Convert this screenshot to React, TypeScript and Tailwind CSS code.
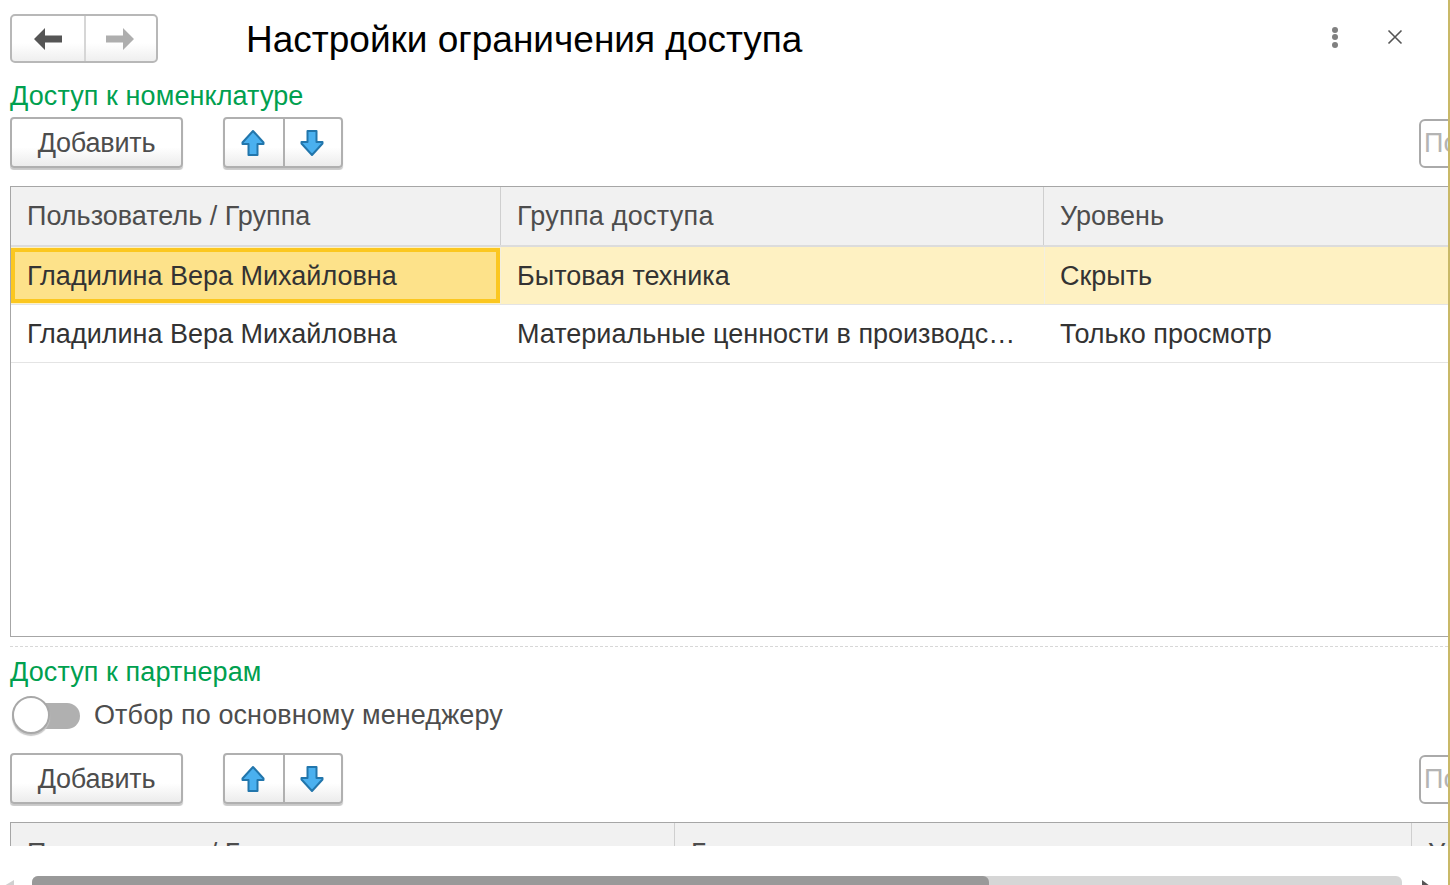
function UpArrow() {
  return (
    <svg className="mr-[2px]" width="24" height="28" viewBox="0 0 24 28">
      <path d="M12 2 L22.5 13.5 L22.5 15 L16.5 15 L16.5 26 L7.5 26 L7.5 15 L1.5 15 L1.5 13.5 Z" fill="#4ab0ef" stroke="#2276ac" strokeWidth="2" strokeLinejoin="round" />
    </svg>
  );
}

function DownArrow() {
  return (
    <svg className="mr-[2px]" width="24" height="28" viewBox="0 0 24 28">
      <path d="M12 26 L22.5 14.5 L22.5 13 L16.5 13 L16.5 2 L7.5 2 L7.5 13 L1.5 13 L1.5 14.5 Z" fill="#4ab0ef" stroke="#2276ac" strokeWidth="2" strokeLinejoin="round" />
    </svg>
  );
}

function Toolbar() {
  return (
    <div className="flex h-[53px] overflow-hidden">
      <button className="w-[173px] h-[51px] shrink-0 rounded-[4px] border-2 border-[#b0b0b0] bg-gradient-to-b from-white from-60% to-[#ececec] shadow-[0_2px_1px_#c8c8c8] pt-[2px] text-[27px] tracking-[-0.2px] leading-none text-[#4d4d4d]">
        Добавить
      </button>
      <div className="ml-[40px] w-[120px] h-[51px] shrink-0 flex rounded-[4px] border-2 border-[#b0b0b0] bg-gradient-to-b from-white from-60% to-[#ececec] shadow-[0_2px_1px_#c8c8c8]">
        <div className="w-[60px] flex items-center justify-center border-r-2 border-[#b0b0b0]">
          <UpArrow />
        </div>
        <div className="flex-1 flex items-center justify-center">
          <DownArrow />
        </div>
      </div>
      <div className="ml-[1076px] mt-[2px] w-[120px] h-[49px] shrink-0 rounded-[6px] border-2 border-[#aaaaaa] pl-[3px] flex items-center text-[27px] text-[#b4b4b4]">
        Поиск
      </div>
    </div>
  );
}

function Row({ a, b, c, active }: { a: string; b: string; c: string; active?: boolean }) {
  return (
    <div className={"flex h-[58px] border-b border-[#e4e4e4] text-[27px] text-[#333333] " + (active ? "bg-[#fef1c2]" : "")}>
      <div className={"w-[489px] shrink-0 flex items-center " + (active ? "bg-[#fde28a] border-[4px] border-[#fbc720] pl-[12px] pt-[2px] mt-[1px] h-[55px]" : "pl-[16px] pt-[1px]")}>
        {a}
      </div>
      <div className={"w-[544px] shrink-0 flex items-center pt-[2px] pr-[24px] " + (active ? "border-l border-[#f3efe0] pl-[16px]" : "pl-[17px]")}>
        <span className="truncate">{b}</span>
      </div>
      <div className={"flex-1 flex items-center pt-[2px] " + (active ? "border-l border-[#f3efe0] pl-[15px]" : "pl-[16px]")}>{c}</div>
    </div>
  );
}

export default function App() {
  return (
    <div className="w-[1450px] h-[885px] overflow-hidden bg-white border-r-2 border-[#c9b968] flex flex-col">
      <div className="h-[846px] overflow-hidden pl-[10px] font-['Liberation_Sans',Arial,sans-serif]">
        {/* шапка формы */}
        <div className="h-[84px] flex pt-[14px]">
          <div className="w-[148px] h-[49px] shrink-0 flex rounded-[5px] border-2 border-[#b8b8b8] bg-gradient-to-b from-white from-60% to-[#efefef]">
            <div className="w-[74px] flex items-center justify-center border-r-2 border-[#d6d6d6]">
              <svg width="30" height="24" viewBox="0 0 30 24">
                <path d="M1 12 L12 1 L12 8.5 L29 8.5 L29 15.5 L12 15.5 L12 23 Z" fill="#555555" />
              </svg>
            </div>
            <div className="flex-1 flex items-center justify-center pr-[2px]">
              <svg width="30" height="24" viewBox="0 0 30 24">
                <path d="M29 12 L18 1 L18 8.5 L1 8.5 L1 15.5 L18 15.5 L18 23 Z" fill="#aeaeae" />
              </svg>
            </div>
          </div>
          <div className="ml-[88px] h-[51px] flex items-center text-[37px] text-black whitespace-nowrap">
            Настройки ограничения доступа
          </div>
          <div className="ml-auto flex h-[46px] items-center">
            <div className="flex flex-col gap-[1.5px]">
              <span className="size-[6px] rounded-full bg-[#808080]" />
              <span className="size-[6px] rounded-full bg-[#808080]" />
              <span className="size-[6px] rounded-full bg-[#808080]" />
            </div>
            <svg className="ml-[49px] mr-[45px]" width="16" height="16" viewBox="0 0 16 16">
              <path d="M1.5 1.5 L14.5 14.5 M14.5 1.5 L1.5 14.5" stroke="#555555" strokeWidth="1.6" />
            </svg>
          </div>
        </div>

        <div className="h-[25px] mb-[8px] text-[27px] tracking-[0.1px] text-[#00a04f] whitespace-nowrap flex items-center">
          Доступ к номенклатуре
        </div>
        <Toolbar />

        {/* первая таблица */}
        <div className="mt-[16px] -mr-[2px] h-[451px] border border-[#a6a6a6] border-r-0 overflow-hidden whitespace-nowrap">
          <div className="flex h-[60px] bg-[#f1f1f1] border-b-2 border-[#dcdcdc] text-[27px] text-[#4d4d4d]">
            <div className="w-[490px] shrink-0 flex items-center pl-[16px] border-r border-[#cfcfcf]">Пользователь / Группа</div>
            <div className="w-[543px] shrink-0 flex items-center pl-[16px] border-r border-[#cfcfcf] tracking-[0.25px]">Группа доступа</div>
            <div className="flex-1 flex items-center pl-[16px]">Уровень</div>
          </div>
          <Row a="Гладилина Вера Михайловна" b="Бытовая техника" c="Скрыть" active />
          <Row a="Гладилина Вера Михайловна" b="Материальные ценности в производстве" c="Только просмотр" />
        </div>

        <div className="mt-[9px] border-t border-dashed border-[#d8d8d8]" />

        <div className="mt-[13px] h-[25px] text-[27px] tracking-[0.1px] text-[#00a04f] whitespace-nowrap flex items-center">
          Доступ к партнерам
        </div>

        {/* переключатель */}
        <div className="mt-[11px] h-[39px] flex items-center">
          <div className="relative ml-[2px] w-[68px] h-[26px] rounded-full bg-[#b0b0b0]">
            <div className="absolute left-0 -top-[7px] size-[38px] rounded-full bg-white border-2 border-[#a8a8a8] shadow-[0_2px_1px_#c8c8c8]" />
          </div>
          <span className="ml-[14px] text-[27px] tracking-[0.1px] text-[#4d4d4d] whitespace-nowrap">Отбор по основному менеджеру</span>
        </div>

        <div className="mt-[18px]">
          <Toolbar />
        </div>

        {/* вторая таблица, обрезана снизу */}
        <div className="mt-[16px] -mr-[2px] h-[60px] border border-[#a6a6a6] border-r-0 overflow-hidden whitespace-nowrap">
          <div className="flex h-[60px] bg-[#f1f1f1] text-[27px] text-[#4d4d4d]">
            <div className="w-[664px] shrink-0 flex items-center pl-[16px] border-r border-[#cfcfcf]">Пользователь / Группа</div>
            <div className="w-[737px] shrink-0 flex items-center pl-[16px] border-r border-[#cfcfcf]">Группа доступа</div>
            <div className="flex-1 flex items-center pl-[16px]">Уровень</div>
          </div>
        </div>
      </div>

      {/* горизонтальная прокрутка */}
      <div className="h-[39px] pt-[30px] flex">
        <svg className="ml-[4px] mt-[4px]" width="10" height="14" viewBox="0 0 10 14">
          <path d="M0 6 L10 0 L10 14 L0 14 Z" fill="#d0d0d0" />
        </svg>
        <div className="ml-[18px] w-[1370px] h-[20px] rounded-t-[6px] bg-[#d6d6d6]">
          <div className="w-[957px] h-full rounded-t-[6px] bg-[#999999]" />
        </div>
        <svg className="ml-[20px] mt-[4px]" width="10" height="14" viewBox="0 0 10 14">
          <path d="M0 0 L8 6 L8 14 L0 14 Z" fill="#555555" />
        </svg>
      </div>
    </div>
  );
}
